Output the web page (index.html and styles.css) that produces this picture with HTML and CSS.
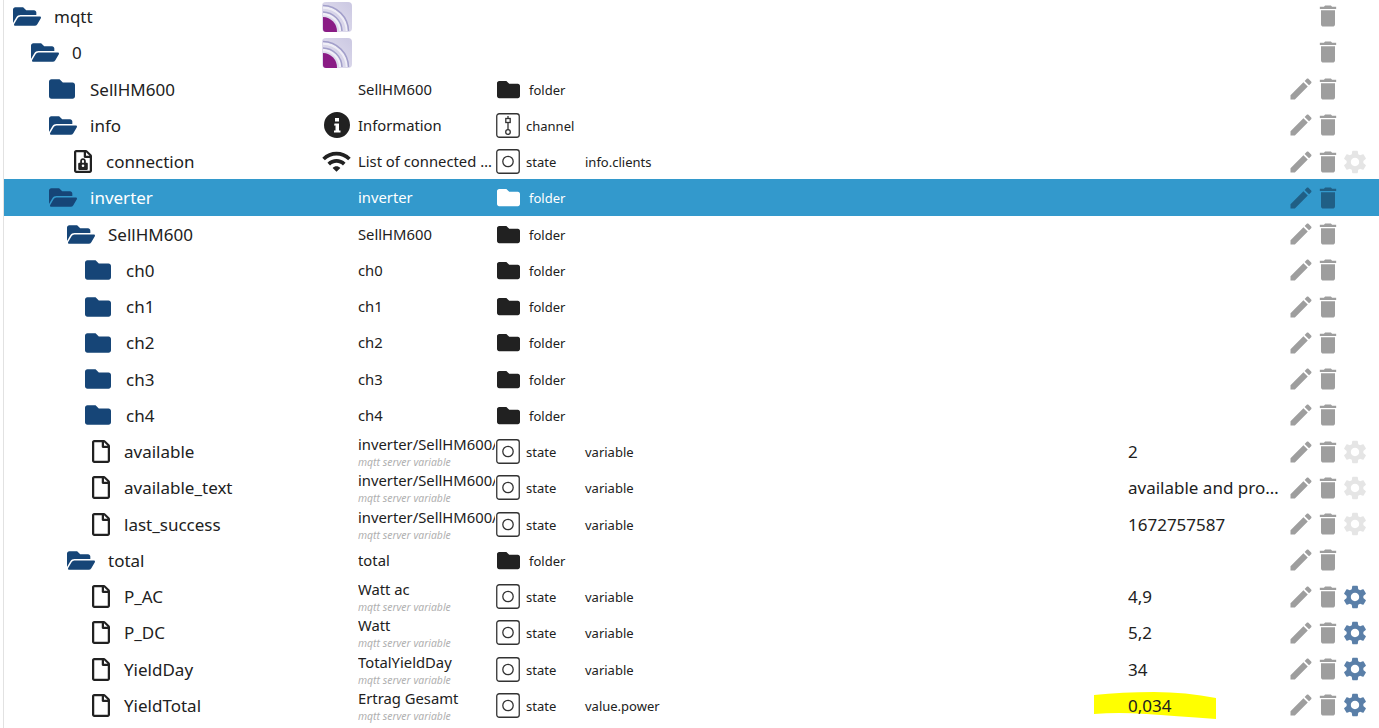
FILE: index.html
```html
<!DOCTYPE html>
<html lang="en">
<head>
<meta charset="utf-8">
<title>mqtt objects</title>
<link rel="stylesheet" href="styles.css">
</head>
<body>
<svg class="defs" width="0" height="0" aria-hidden="true">
  <defs>
    <symbol id="open" viewBox="0 0 576 512"><path d="M572.694 292.093L500.27 416.248A63.997 63.997 0 0 1 444.989 448H45.025c-18.523 0-30.064-20.093-20.731-36.093l72.424-124.155A64 64 0 0 1 152 256h399.964c18.523 0 30.064 20.093 20.73 36.093zM152 224h328v-48c0-26.51-21.49-48-48-48H272l-64-64H48C21.49 64 0 85.49 0 112v278.046l69.077-118.418C86.214 242.25 117.989 224 152 224z"/></symbol>
    <symbol id="closed" viewBox="0 0 512 512"><path d="M464 128H272l-64-64H48C21.49 64 0 85.49 0 112v288c0 26.51 21.49 48 48 48h416c26.51 0 48-21.49 48-48V176c0-26.51-21.49-48-48-48z"/></symbol>
    <symbol id="file" viewBox="0 0 384 512" preserveAspectRatio="none"><path d="M369.9 97.9L286 14C277 5 264.8-.1 252.1-.1H48C21.5 0 0 21.5 0 48v416c0 26.5 21.5 48 48 48h288c26.5 0 48-21.5 48-48V131.9c0-12.7-5.1-25-14.1-34zM332.1 128H256V51.9l76.1 76.1zM48 464V48h160v104c0 13.3 10.7 24 24 24h104v288H48z"/></symbol>
    <symbol id="lockfile" viewBox="0 0 384 512" preserveAspectRatio="none"><path d="M369.9 97.9L286 14C277 5 264.8-.1 252.1-.1H48C21.5 0 0 21.5 0 48v416c0 26.5 21.5 48 48 48h288c26.5 0 48-21.5 48-48V131.9c0-12.7-5.1-25-14.1-34zM332.1 128H256V51.9l76.1 76.1zM48 464V48h160v104c0 13.3 10.7 24 24 24h104v288H48z"/><path fill-rule="evenodd" d="M192 185c-36 0-60 26-60 60v40h-22c-11 0-20 9-20 20v120c0 11 9 20 20 20h164c11 0 20-9 20-20v-120c0-11-9-20-20-20h-22v-40c0-34-24-60-60-60zm0 38c13 0 22 10 22 24v38h-44v-38c0-14 9-24 22-24zm0 98a28 28 0 1 1 0 56a28 28 0 1 1 0-56z"/></symbol>
    <symbol id="pencil" viewBox="0 0 24 24"><path d="M3 17.25V21h3.75L17.81 9.94l-3.75-3.75L3 17.25zM20.71 7.04c.39-.39.39-1.02 0-1.41l-2.34-2.34c-.39-.39-1.02-.39-1.41 0l-1.83 1.83 3.75 3.75 1.83-1.83z"/></symbol>
    <symbol id="trash" viewBox="0 0 24 24"><path d="M6 19c0 1.1.9 2 2 2h8c1.1 0 2-.9 2-2V7H6v12zM19 4h-3.5l-1-1h-5l-1 1H5v2h14V4z"/></symbol>
    <symbol id="gear" viewBox="0 0 24 24"><path d="M19.14,12.94c0.04-0.3,0.06-0.61,0.06-0.94c0-0.32-0.02-0.64-0.07-0.94l2.03-1.58c0.18-0.14,0.23-0.41,0.12-0.61 l-1.92-3.32c-0.12-0.22-0.37-0.29-0.59-0.22l-2.39,0.96c-0.5-0.38-1.03-0.7-1.62-0.94L14.4,2.81c-0.04-0.24-0.24-0.41-0.48-0.41 h-3.84c-0.24,0-0.43,0.17-0.47,0.41L9.25,5.35C8.66,5.59,8.12,5.92,7.63,6.29L5.24,5.33c-0.22-0.08-0.47,0-0.59,0.22L2.74,8.87 C2.62,9.08,2.66,9.34,2.86,9.48l2.03,1.58C4.84,11.36,4.8,11.69,4.8,12s0.02,0.64,0.07,0.94l-2.03,1.58 c-0.18,0.14-0.23,0.41-0.12,0.61l1.92,3.32c0.12,0.22,0.37,0.29,0.59,0.22l2.39-0.96c0.5,0.38,1.03,0.7,1.62,0.94l0.36,2.54 c0.05,0.24,0.24,0.41,0.48,0.41h3.84c0.24,0,0.44-0.17,0.47-0.41l0.36-2.54c0.59-0.24,1.13-0.56,1.62-0.94l2.39,0.96 c0.22,0.08,0.47,0,0.59-0.22l1.92-3.32c0.12-0.22,0.07-0.47-0.12-0.61L19.14,12.94z M12,15.6c-1.98,0-3.6-1.62-3.6-3.6 s1.62-3.6,3.6-3.6s3.6,1.62,3.6,3.6S13.98,15.6,12,15.6z"/></symbol>
    <symbol id="wifi" viewBox="0 0 24 24"><path d="M1 9l2 2c4.97-4.97 13.03-4.97 18 0l2-2C16.93 2.93 7.08 2.93 1 9zm8 8l3 3 3-3c-1.65-1.66-4.34-1.66-6 0zm-4-4l2 2c2.76-2.76 7.24-2.76 10 0l2-2C15.14 9.14 8.87 9.14 5 13z"/></symbol>
    <symbol id="info" viewBox="0 0 26 26"><path fill-rule="evenodd" d="M13 0a13 13 0 1 0 0 26a13 13 0 1 0 0-26zM11 6h4v3.500h-4zM10.500 11.500h4.500v7h1.500v2h-6.500v-2h1.500v-5h-1.500z"/></symbol>
    <symbol id="state" viewBox="0 0 24 25"><rect x=".75" y=".75" width="22.500" height="23.500" rx="2.500" fill="none" stroke="currentColor" stroke-width="1.300"/><circle cx="12" cy="12.500" r="5.200" fill="none" stroke="currentColor" stroke-width="1.300"/></symbol>
    <symbol id="channel" viewBox="0 0 24 25"><rect x=".75" y=".75" width="22.500" height="23.500" rx="2.500" fill="none" stroke="currentColor" stroke-width="1.300"/><path d="M12 3v16" stroke="currentColor" stroke-width="1.300"/><rect x="9.800" y="5.500" width="4.400" height="4" fill="#fff" stroke="currentColor" stroke-width="1.300"/><circle cx="12" cy="19" r="2.300" fill="#fff" stroke="currentColor" stroke-width="1.300"/></symbol>
    <linearGradient id="mq" x1="0" y1="1" x2="1" y2="0"><stop offset="0" stop-color="#e6e3f1"/><stop offset="1" stop-color="#cbc8e2"/></linearGradient>
    <symbol id="mqtt" viewBox="0 0 30 30"><rect width="30" height="30" rx="4" fill="url(#mq)"/><path d="M1 5.500A24.500 24.500 0 0 1 25 29" fill="none" stroke="#fff" stroke-width="2.500" opacity=".6"/><path d="M1 3.500A26 26 0 0 1 26.500 29" fill="none" stroke="#a29fca" stroke-width="1.500"/><path d="M1 12A18 18 0 0 1 18.500 29" fill="none" stroke="#fff" stroke-width="2.500" opacity=".6"/><path d="M1 10A19.500 19.500 0 0 1 20 29" fill="none" stroke="#a29fca" stroke-width="1.500"/><path d="M1 15A14.500 14.500 0 0 1 15 30H4a3 3 0 0 1-3-3z" fill="#8a1c85"/></symbol>
  </defs>
</svg>

<main class="tree">
  <div class="row root">
    <div class="name l0"><svg class="ico folder-open"><use href="#open"/></svg><span>mqtt</span></div>
    <div class="pic"><svg class="mq"><use href="#mqtt"/></svg></div>
    <div class="desc"></div><div class="type"></div><div class="role"></div><div class="value"></div>
    <div class="actions"><span class="act"></span><svg class="act trash"><use href="#trash"/></svg><span class="act"></span></div>
  </div>
  <div class="row root">
    <div class="name l1"><svg class="ico folder-open"><use href="#open"/></svg><span>0</span></div>
    <div class="pic"><svg class="mq"><use href="#mqtt"/></svg></div>
    <div class="desc"></div><div class="type"></div><div class="role"></div><div class="value"></div>
    <div class="actions"><span class="act"></span><svg class="act trash"><use href="#trash"/></svg><span class="act"></span></div>
  </div>
  <div class="row">
    <div class="name l2"><svg class="ico folder-shut"><use href="#closed"/></svg><span>SellHM600</span></div>
    <div class="pic"></div>
    <div class="desc"><span>SellHM600</span></div>
    <div class="type folder-type"><svg class="tf"><use href="#closed"/></svg><span>folder</span></div><div class="role"></div><div class="value"></div>
    <div class="actions"><svg class="act pencil"><use href="#pencil"/></svg><svg class="act trash"><use href="#trash"/></svg><span class="act"></span></div>
  </div>
  <div class="row">
    <div class="name l2"><svg class="ico folder-open"><use href="#open"/></svg><span>info</span></div>
    <div class="pic"><svg class="info"><use href="#info"/></svg></div>
    <div class="desc"><span>Information</span></div>
    <div class="type"><svg class="ts"><use href="#channel"/></svg><span>channel</span></div><div class="role"></div><div class="value"></div>
    <div class="actions"><svg class="act pencil"><use href="#pencil"/></svg><svg class="act trash"><use href="#trash"/></svg><span class="act"></span></div>
  </div>
  <div class="row">
    <div class="name l3 leaf"><svg class="ico file"><use href="#lockfile"/></svg><span>connection</span></div>
    <div class="pic"><svg class="wifi"><use href="#wifi"/></svg></div>
    <div class="desc"><span>List of connected clients</span></div>
    <div class="type"><svg class="ts"><use href="#state"/></svg><span>state</span></div><div class="role">info.clients</div><div class="value"></div>
    <div class="actions"><svg class="act pencil"><use href="#pencil"/></svg><svg class="act trash"><use href="#trash"/></svg><svg class="act gear-off"><use href="#gear"/></svg></div>
  </div>
  <div class="row selected">
    <div class="name l2"><svg class="ico folder-open"><use href="#open"/></svg><span>inverter</span></div>
    <div class="pic"></div>
    <div class="desc"><span>inverter</span></div>
    <div class="type folder-type"><svg class="tf"><use href="#closed"/></svg><span>folder</span></div><div class="role"></div><div class="value"></div>
    <div class="actions"><svg class="act pencil"><use href="#pencil"/></svg><svg class="act trash"><use href="#trash"/></svg><span class="act"></span></div>
  </div>
  <div class="row">
    <div class="name l3"><svg class="ico folder-open"><use href="#open"/></svg><span>SellHM600</span></div>
    <div class="pic"></div>
    <div class="desc"><span>SellHM600</span></div>
    <div class="type folder-type"><svg class="tf"><use href="#closed"/></svg><span>folder</span></div><div class="role"></div><div class="value"></div>
    <div class="actions"><svg class="act pencil"><use href="#pencil"/></svg><svg class="act trash"><use href="#trash"/></svg><span class="act"></span></div>
  </div>
  <div class="row">
    <div class="name l4"><svg class="ico folder-shut"><use href="#closed"/></svg><span>ch0</span></div>
    <div class="pic"></div>
    <div class="desc"><span>ch0</span></div>
    <div class="type folder-type"><svg class="tf"><use href="#closed"/></svg><span>folder</span></div><div class="role"></div><div class="value"></div>
    <div class="actions"><svg class="act pencil"><use href="#pencil"/></svg><svg class="act trash"><use href="#trash"/></svg><span class="act"></span></div>
  </div>
  <div class="row">
    <div class="name l4"><svg class="ico folder-shut"><use href="#closed"/></svg><span>ch1</span></div>
    <div class="pic"></div>
    <div class="desc"><span>ch1</span></div>
    <div class="type folder-type"><svg class="tf"><use href="#closed"/></svg><span>folder</span></div><div class="role"></div><div class="value"></div>
    <div class="actions"><svg class="act pencil"><use href="#pencil"/></svg><svg class="act trash"><use href="#trash"/></svg><span class="act"></span></div>
  </div>
  <div class="row">
    <div class="name l4"><svg class="ico folder-shut"><use href="#closed"/></svg><span>ch2</span></div>
    <div class="pic"></div>
    <div class="desc"><span>ch2</span></div>
    <div class="type folder-type"><svg class="tf"><use href="#closed"/></svg><span>folder</span></div><div class="role"></div><div class="value"></div>
    <div class="actions"><svg class="act pencil"><use href="#pencil"/></svg><svg class="act trash"><use href="#trash"/></svg><span class="act"></span></div>
  </div>
  <div class="row">
    <div class="name l4"><svg class="ico folder-shut"><use href="#closed"/></svg><span>ch3</span></div>
    <div class="pic"></div>
    <div class="desc"><span>ch3</span></div>
    <div class="type folder-type"><svg class="tf"><use href="#closed"/></svg><span>folder</span></div><div class="role"></div><div class="value"></div>
    <div class="actions"><svg class="act pencil"><use href="#pencil"/></svg><svg class="act trash"><use href="#trash"/></svg><span class="act"></span></div>
  </div>
  <div class="row">
    <div class="name l4"><svg class="ico folder-shut"><use href="#closed"/></svg><span>ch4</span></div>
    <div class="pic"></div>
    <div class="desc"><span>ch4</span></div>
    <div class="type folder-type"><svg class="tf"><use href="#closed"/></svg><span>folder</span></div><div class="role"></div><div class="value"></div>
    <div class="actions"><svg class="act pencil"><use href="#pencil"/></svg><svg class="act trash"><use href="#trash"/></svg><span class="act"></span></div>
  </div>
  <div class="row">
    <div class="name l4 leaf"><svg class="ico file"><use href="#file"/></svg><span>available</span></div>
    <div class="pic"></div>
    <div class="desc two"><span>inverter/SellHM600/available</span><small>mqtt server variable</small></div>
    <div class="type"><svg class="ts"><use href="#state"/></svg><span>state</span></div><div class="role">variable</div><div class="value"><span>2</span></div>
    <div class="actions"><svg class="act pencil"><use href="#pencil"/></svg><svg class="act trash"><use href="#trash"/></svg><svg class="act gear-off"><use href="#gear"/></svg></div>
  </div>
  <div class="row">
    <div class="name l4 leaf"><svg class="ico file"><use href="#file"/></svg><span>available_text</span></div>
    <div class="pic"></div>
    <div class="desc two"><span>inverter/SellHM600/available_text</span><small>mqtt server variable</small></div>
    <div class="type"><svg class="ts"><use href="#state"/></svg><span>state</span></div><div class="role">variable</div><div class="value"><span>available and producing</span></div>
    <div class="actions"><svg class="act pencil"><use href="#pencil"/></svg><svg class="act trash"><use href="#trash"/></svg><svg class="act gear-off"><use href="#gear"/></svg></div>
  </div>
  <div class="row">
    <div class="name l4 leaf"><svg class="ico file"><use href="#file"/></svg><span>last_success</span></div>
    <div class="pic"></div>
    <div class="desc two"><span>inverter/SellHM600/last_success</span><small>mqtt server variable</small></div>
    <div class="type"><svg class="ts"><use href="#state"/></svg><span>state</span></div><div class="role">variable</div><div class="value"><span>1672757587</span></div>
    <div class="actions"><svg class="act pencil"><use href="#pencil"/></svg><svg class="act trash"><use href="#trash"/></svg><svg class="act gear-off"><use href="#gear"/></svg></div>
  </div>
  <div class="row">
    <div class="name l3"><svg class="ico folder-open"><use href="#open"/></svg><span>total</span></div>
    <div class="pic"></div>
    <div class="desc"><span>total</span></div>
    <div class="type folder-type"><svg class="tf"><use href="#closed"/></svg><span>folder</span></div><div class="role"></div><div class="value"></div>
    <div class="actions"><svg class="act pencil"><use href="#pencil"/></svg><svg class="act trash"><use href="#trash"/></svg><span class="act"></span></div>
  </div>
  <div class="row">
    <div class="name l4 leaf"><svg class="ico file"><use href="#file"/></svg><span>P_AC</span></div>
    <div class="pic"></div>
    <div class="desc two"><span>Watt ac</span><small>mqtt server variable</small></div>
    <div class="type"><svg class="ts"><use href="#state"/></svg><span>state</span></div><div class="role">variable</div><div class="value"><span>4,9</span></div>
    <div class="actions"><svg class="act pencil"><use href="#pencil"/></svg><svg class="act trash"><use href="#trash"/></svg><svg class="act gear-on"><use href="#gear"/></svg></div>
  </div>
  <div class="row">
    <div class="name l4 leaf"><svg class="ico file"><use href="#file"/></svg><span>P_DC</span></div>
    <div class="pic"></div>
    <div class="desc two"><span>Watt</span><small>mqtt server variable</small></div>
    <div class="type"><svg class="ts"><use href="#state"/></svg><span>state</span></div><div class="role">variable</div><div class="value"><span>5,2</span></div>
    <div class="actions"><svg class="act pencil"><use href="#pencil"/></svg><svg class="act trash"><use href="#trash"/></svg><svg class="act gear-on"><use href="#gear"/></svg></div>
  </div>
  <div class="row">
    <div class="name l4 leaf"><svg class="ico file"><use href="#file"/></svg><span>YieldDay</span></div>
    <div class="pic"></div>
    <div class="desc two"><span>TotalYieldDay</span><small>mqtt server variable</small></div>
    <div class="type"><svg class="ts"><use href="#state"/></svg><span>state</span></div><div class="role">variable</div><div class="value"><span>34</span></div>
    <div class="actions"><svg class="act pencil"><use href="#pencil"/></svg><svg class="act trash"><use href="#trash"/></svg><svg class="act gear-on"><use href="#gear"/></svg></div>
  </div>
  <div class="row">
    <div class="name l4 leaf"><svg class="ico file"><use href="#file"/></svg><span>YieldTotal</span></div>
    <div class="pic"></div>
    <div class="desc two"><span>Ertrag Gesamt</span><small>mqtt server variable</small></div>
    <div class="type"><svg class="ts"><use href="#state"/></svg><span>state</span></div><div class="role">value.power</div>
    <div class="value marked"><svg class="marker" viewBox="0 0 122 27"><path d="M0 3Q28 0 60 0T122 6V27Q80 24 52 22T0 22z"/></svg><span>0,034</span></div>
    <div class="actions"><svg class="act pencil"><use href="#pencil"/></svg><svg class="act trash"><use href="#trash"/></svg><svg class="act gear-on"><use href="#gear"/></svg></div>
  </div>
  <div class="row peek">
    <div class="name"></div>
    <div class="pic"></div>
    <div class="desc"><span>l</span></div>
  </div>
</main>
</body>
</html>
```

FILE: styles.css
```css
* { box-sizing: border-box; }
html, body { margin: 0; height: 100%; overflow: hidden; background: #fff; }
body { font-family: "Noto Sans", "Open Sans", sans-serif; color: #212121; }
.defs { position: absolute; }

.tree { margin: -2px 0 0 3px; border-left: 1px solid #e2e2e2; height: 760px; }

.row {
  display: grid;
  grid-template-columns: 318px 36px 138px 89px 543px 158px 93px;
  height: 36.25px;
  padding-top: 1px;
  align-items: center;
}
.selected { background: #3399cc; color: #fff; }

.name { display: flex; align-items: center; font-size: 17px; white-space: nowrap; }
.l0 { padding-left: 9px; }
.l1 { padding-left: 27px; }
.l2 { padding-left: 45px; }
.l3 { padding-left: 63px; }
.l4 { padding-left: 81px; }
.ico { flex: none; fill: #164577; }
.folder-open { width: 28px; height: 25px; margin-right: 13px; }
.folder-shut { width: 26px; height: 26px; margin-right: 15px; }
.file { width: 18px; height: 23px; fill: #212121; margin: 0 14px 0 7px; }

.pic { display: flex; align-items: center; height: 100%; }
.mq { width: 30px; height: 30px; }
.info { width: 26px; height: 26px; margin-left: 2px; fill: #212121; }
.wifi { width: 31px; height: 31px; margin-left: -1px; fill: #212121; }

.desc { font-size: 14.800px; line-height: 19px; min-width: 0; overflow: hidden; white-space: nowrap; }
.desc > span { display: block; overflow: hidden; text-overflow: ellipsis; }
.desc.two { height: 34px; margin-top: 1px; padding-right: 1px; }
.desc.two > span { text-overflow: clip; }
.desc small { display: block; margin-top: 2px; font-size: 10.400px; line-height: 12px; font-style: italic; color: #b0b0b0; }
.peek .desc { align-self: start; }

.type { display: flex; align-items: center; font-size: 13px; }
.type > span { padding-top: 1px; }
.ts { width: 24px; height: 25px; color: #333; margin-right: 6px; flex: none; }
.tf { width: 23px; height: 23px; fill: #212121; margin: 0 9px 0 1px; flex: none; }
.selected .tf { fill: #fff; }
.role { font-size: 13px; padding-top: 1px; white-space: nowrap; }

.value { position: relative; font-size: 17px; white-space: nowrap; overflow: visible; min-width: 0; }
.value > span { position: relative; display: block; overflow: hidden; text-overflow: ellipsis; }
.marker { position: absolute; left: -34px; top: -2px; width: 122px; height: 27px; fill: #ffff00; }

.actions { display: flex; }
.act { width: 28px; height: 28px; flex: none; margin-right: -.5px; }
.root .actions { margin-top: -2px; }
.pencil { margin-left: 1px; margin-right: -1.500px; }
.pencil, .trash { fill: #9e9e9e; }
.gear-off { fill: #e5e5e5; }
.gear-on { fill: #5a7fa8; }
.selected .pencil, .selected .trash { fill: #205f85; }
```
